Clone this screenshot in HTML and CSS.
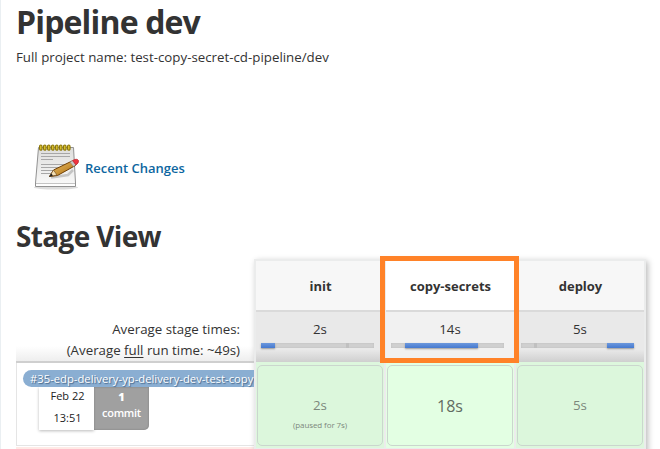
FILE: index.html
```
<!DOCTYPE html>
<html lang="en">
<head>
<meta charset="utf-8">
<title>Pipeline dev</title>
<link rel="stylesheet" href="styles.css">
</head>
<body>
<main class="panel">
  <h1 class="title"><span>Pipeline dev</span></h1>
  <p class="project">Full project name: test-copy-secret-cd-pipeline/dev</p>
  <a class="changes">
    <svg class="notepad" width="50" height="50" viewBox="0 0 50 50">
      <defs>
        <linearGradient id="paper" x1="0" y1="0" x2="0" y2="1"><stop offset="0" stop-color="#dededc"/><stop offset="1" stop-color="#fafafa"/></linearGradient>
        <linearGradient id="wood" x1="0" y1="0" x2="1" y2="1"><stop offset="0" stop-color="#f0c66f"/><stop offset="1" stop-color="#a96808"/></linearGradient>
      </defs>
      <ellipse cx="24" cy="44.500" rx="22" ry="2" fill="#ddd"/>
      <path d="M6.500 4.500H41.500L43.500 40V43.500H3.500V40Z" fill="url(#paper)" stroke="#929292"/>
      <path d="M4 40.500H43" stroke="#c4c4c4"/>
      <path d="M4 42H43" stroke="#fff" stroke-width="1.500"/>
      <path d="M9 10.500H38M9 13.500H38M9 16.500H21M9 21.500H38M9 24.500H32M9 27.500H27M9 30.500H19" stroke="#a7a7a7"/>
      <g fill="#e9d13a" stroke="#8c7609" stroke-width="1.200">
        <rect x="7.600" y="2" width="2.400" height="5.200" rx="1.200"/><rect x="11.600" y="2" width="2.400" height="5.200" rx="1.200"/><rect x="15.600" y="2" width="2.400" height="5.200" rx="1.200"/><rect x="19.600" y="2" width="2.400" height="5.200" rx="1.200"/><rect x="23.600" y="2" width="2.400" height="5.200" rx="1.200"/><rect x="27.600" y="2" width="2.400" height="5.200" rx="1.200"/><rect x="31.600" y="2" width="2.400" height="5.200" rx="1.200"/><rect x="35.600" y="2" width="2.400" height="5.200" rx="1.200"/>
      </g>
      <path d="M19 34.500L36 32L41 27" stroke="#999" stroke-opacity=".5" stroke-width="2.500" fill="none"/>
      <path d="M17.500 33.500L21.500 27L40 18L43.500 22.500L25.500 32.500Z" fill="url(#wood)" stroke="#704006"/>
      <path d="M17.500 33.500L21.500 27L25 32Z" fill="#f3dfb5" stroke="#765022" stroke-width=".7"/>
      <path d="M17 34L19.300 30.500L21 32.500Z" fill="#222"/>
      <path d="M38 19L41 17.500L44 21.500L41.500 23.500Z" fill="#c7c7c7" stroke="#888" stroke-width=".5"/>
      <path d="M40.500 17.500Q45 15 46.500 17.500Q47 20 44 22Z" fill="#ef3340" stroke="#b82228" stroke-width=".7"/>
    </svg>
    <span>Recent Changes</span>
  </a>
  <h2 class="subtitle"><span>Stage View</span></h2>
  <section class="board">
    <div class="side">
      <div class="averages">
        <div class="avg-a">Average stage times:</div>
        <div class="avg-b">(Average <u>full</u> run time: ~49s)</div>
      </div>
      <div class="job">
        <div class="badge">#35-edp-delivery-yp-delivery-dev-test-copy</div>
        <div class="info">
          <div class="date"><span>Feb 22</span><span>13:51</span></div>
          <div class="commit"><b>1</b><span>commit</span></div>
        </div>
      </div>
      <div class="next"></div>
    </div>
    <div class="stages">
      <div class="stage">
        <div class="name">init</div>
        <div class="time">2s<div class="bar"><i class="f1"></i><em class="t1"></em></div></div>
        <div class="cell"><div class="box"><span class="dur">2s</span><small>(paused for 7s)</small></div></div>
      </div>
      <div class="stage active">
        <div class="name">copy-secrets</div>
        <div class="time">14s<div class="bar"><i class="f2"></i></div></div>
        <div class="cell"><div class="box"><span class="dur">18s</span></div></div>
        <div class="highlight"></div>
      </div>
      <div class="stage">
        <div class="name">deploy</div>
        <div class="time">5s<div class="bar"><em class="t3"></em><i class="f3"></i></div></div>
        <div class="cell"><div class="box"><span class="dur">5s</span></div></div>
      </div>
    </div>
  </section>
</main>
</body>
</html>
```
FILE: styles.css
```
* { box-sizing: border-box; }
body { margin: 0; overflow: hidden; background: #fff; color: #333; font-family: "Open Sans", "Noto Sans", sans-serif; font-size: 13.3px; }
.panel { height: 449px; overflow: hidden; border-left: 1px solid #eaeff2; padding-left: 15px; }
h1, h2, p { margin: 0; white-space: nowrap; }
.title { height: 44px; line-height: 44px; font-size: 32px; letter-spacing: -.85px; }
.project { height: 26px; line-height: 26px; }
.changes { display: flex; align-items: center; height: 50px; margin: 73px 0 0 16px; color: #0d66a0; font-size: 13px; font-weight: 600; }
.notepad { flex: none; margin-right: 3px; }
.subtitle { height: 40px; margin-top: 23px; line-height: 40px; font-size: 28px; letter-spacing: -.65px; }
.board { display: flex; margin-top: 3px; height: 200px; }
.side { width: 238px; flex: none; padding-top: 40px; overflow: hidden; }
.averages { height: 64px; padding: 20px 14px 0 0; text-align: right; line-height: 21px; border-bottom: 2px solid #cfcfcf; background: linear-gradient(#fff 76%, #eee); white-space: nowrap; }
.averages u { text-underline-offset: 2px; }
.job { height: 83px; padding: 7px 0 0 6px; border-left: 1px solid #e5e5e5; border-bottom: 1px solid #e5e5e5; }
.badge { position: relative; width: 240px; height: 17px; padding-left: 7px; border-radius: 9px 0 0 9px; background: #8aaed2; color: #fff; font-size: 11.25px; line-height: 17px; white-space: nowrap; text-shadow: 1px 1px 1px #47688a; }
.info { display: flex; height: 43px; margin-left: 16px; }
.date { display: flex; flex-direction: column; width: 55px; text-align: center; font-size: 11px; line-height: 22px; box-shadow: 0 1px 3px #bbb; color: #222; }
.date span { position: relative; top: -2px; left: 1px; }
.commit { display: flex; flex-direction: column; width: 55px; padding-top: 2px; border-radius: 0 0 5px 0; text-align: center; background: #a0a0a0; box-shadow: inset 0 0 2px #777; color: #fff; font-size: 11px; line-height: 16px; font-weight: 600; }
.commit span { letter-spacing: -.3px; }
.next { height: 20px; margin-top: 1px; background: #ffeae6; }
.stages { display: grid; grid-template-columns: 130px 130px 128px; width: 392px; padding: 2px; background: #ebecec; box-shadow: 2px 2px 6px #bbb; }
.stage { position: relative; border-right: 2px solid #ececec; }
.stage:last-child { border-right: 0; }
.name { height: 49px; padding-left: 1px; line-height: 50px; text-align: center; background: #f7f7f7; font-size: 13px; font-weight: 700; }
.time { height: 52px; padding: 5px 5px 0; border-top: 2px solid #dadada; background: linear-gradient(#e9e9e9 75%, #cfcfcf); text-align: center; line-height: 24px; }
.active .name { background: #fff; }
.active .time { background: #f1f1f1; }
.bar { position: relative; width: 113px; height: 5px; margin-top: 2px; background: #d0d0d0; box-shadow: inset 0 0 2px #bbb; }
.bar i, .bar em { position: absolute; top: 0; height: 5px; }
.bar i { background: linear-gradient(#6c98dc, #4579d0); box-shadow: 0 1px 2px #999; }
.bar em { width: 3px; background: #c0c0c0; }
.f1 { left: 0; width: 14px; }
.t1 { left: 85px; }
.f2 { left: 14px; width: 73px; }
.f3 { left: 86px; width: 27px; }
.t3 { left: 13px; }
.cell { height: 86px; padding: 3px 1px 2px; background: #ddf7dd; }
.box { display: flex; flex-direction: column; height: 81px; padding-top: 27px; border: 1px solid #cbd6ce; border-radius: 5px; text-align: center; color: #7c887c; background: #dcf7dc; }
.dur { height: 24px; line-height: 24px; }
.box small { font-size: 8px; line-height: 15px; letter-spacing: -.1px; }
.active .cell, .active .box { background: #e3ffe3; }
.active .box { padding-top: 28px; color: #626c62; font-size: 16px; }
.highlight { position: absolute; z-index: 2; left: -6px; top: -5px; width: 139px; height: 107px; border: 5px solid #ff8228; }
```
